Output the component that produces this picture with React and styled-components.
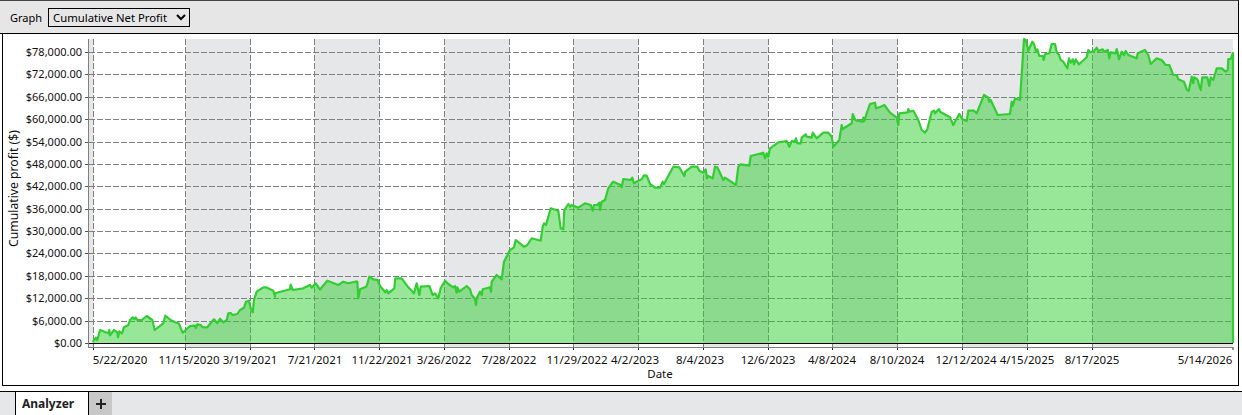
import React from "react";
import styled, { createGlobalStyle } from "styled-components";

const GlobalStyle = createGlobalStyle`
  html, body { margin: 0; padding: 0; background: #fff; }
  body { font-family: "Noto Sans", "Liberation Sans", sans-serif; }
`;

const Page = styled.div`
  width: 1242px;
  height: 415px;
  display: flex;
  flex-direction: column;
  overflow: hidden;
  background: #fff;
`;

const Toolbar = styled.div`
  box-sizing: border-box;
  width: 1239px;
  height: 34px;
  display: flex;
  align-items: center;
  gap: 6px;
  padding: 0 0 0 10px;
  background: #e6e6e6;
  border-top: 1px solid #444;
  border-right: 1px solid #000;
  border-bottom: 1px solid #000;
`;

const Label = styled.span`
  font-size: 11px;
  color: #000;
`;

const GraphSelect = styled.select`
  box-sizing: border-box;
  width: 142px;
  height: 19px;
  padding: 0;
  font-family: "Noto Sans", sans-serif;
  font-size: 11.3px;
  color: #000;
  background: #e6e6e6;
  border: 1px solid #000;
  border-radius: 0;
  outline: none;
`;

const ChartPanel = styled.div`
  box-sizing: border-box;
  width: 1237px;
  height: 353px;
  margin: -1px 0 0 2px;
  border: 1px solid #000;
  background: #fff;
`;

const ChartSvg = styled.svg`
  display: block;
  width: 1235px;
  height: 351px;
`;

const AxisText = styled.text`
  font-family: "Noto Sans", sans-serif;
  font-size: ${(p) => p.$size || 11.5}px;
  fill: #111;
`;

const TabBar = styled.div`
  box-sizing: border-box;
  width: 1242px;
  height: 24px;
  margin-top: 5px;
  padding-left: 15px;
  display: flex;
  background: #e6e7e9;
  border-top: 1px solid #000;
`;

const Tab = styled.div`
  box-sizing: border-box;
  width: 74px;
  height: 23px;
  padding-left: 6px;
  display: flex;
  align-items: center;
  font-size: 12px;
  font-weight: 700;
  color: #222;
  background: #fff;
  border-left: 1px solid #000;
  border-right: 1px solid #000;
`;

const AddTab = styled.div`
  width: 23px;
  height: 23px;
  display: flex;
  align-items: center;
  justify-content: center;
  background: #c8c8c8;
`;

const ticks = [93.5, 185.5, 250.5, 314.5, 379.5, 444.5, 509.5, 573.5, 638.5, 703.5, 768.5, 832.5, 897.5, 962.5, 1027.5, 1092.5];
const bands = [[89, 93.5], [185.5, 250.5], [314.5, 379.5], [444.5, 509.5], [573.5, 638.5], [703.5, 768.5], [832.5, 897.5], [962.5, 1027.5], [1092.5, 1233]];
const xLabels = [
  ["5/22/2020", 120], ["11/15/2020", 189], ["3/19/2021", 250], ["7/21/2021", 315], ["11/22/2021", 382], ["3/26/2022", 444],
  ["7/28/2022", 509], ["11/29/2022", 577], ["4/2/2023", 635], ["8/4/2023", 700], ["12/6/2023", 768], ["4/8/2024", 832],
  ["8/10/2024", 897], ["12/12/2024", 966], ["4/15/2025", 1027], ["8/17/2025", 1092], ["5/14/2026", 1205],
];
const yValue = (i) => 343 - i * 22.385;
const money = (i) => `$${(i * 6000).toLocaleString("en-US")}.00`;

const curve = "93,342 95.7,337.7 97.3,340 100,330 108.3,333.3 109.3,330 110,335.3 114,330 117.3,332.3 118,337.3 119.3,331.3 122,333.3 124,327.3 128.3,325 130,320 132.7,317.3 134.3,319.3 135.7,317.3 137.3,320 141.7,320 146.7,316 152.3,320 154.7,330 163.3,323.3 165.3,315.7 170.7,320 175,322.3 178.7,323.3 182.7,332.7 185.7,330 190,326 195,325.7 195.7,328 197.3,324.3 200.7,325 202.7,327.3 207.3,327.3 211.7,321.7 214,319.3 217.3,323.3 220,318.7 223.3,322.3 226.7,320 228.3,313.3 230.7,313 232.7,315 237.3,314 240,310 244,307.7 246,301.7 249,300.7 250.7,308.3 252.7,312.3 254,300 256.7,291.7 263.3,287.3 266,287.3 273.3,290.7 275,296.7 275,293.3 290,289.3 290.7,284.7 292.7,290 303.3,288.3 310,285 311.7,287.7 315.7,283.3 320,289.5 327.3,280.7 338.3,285 343.3,281.7 348.3,283.3 355,281.7 357.3,281.7 358.3,298.3 360,289.3 366,286.7 367,285 369.3,276.7 373.3,279.3 377.7,280 380,286 385.3,292.3 386.7,290 388.3,293.3 394.3,288.3 395.3,278.3 401.7,278.3 408.3,287.3 414,293.3 416.7,283.3 419.3,295 420.7,286.7 429.3,286 432.7,295 435,293.3 438.3,298.3 440.7,288.3 445,280.7 448.3,284 453.3,287.3 455,286 456.7,292.7 457.3,287.3 459.3,291.7 466.7,286 470,289.3 471.7,295 475,299 476,305 476.7,298.3 480,291.7 481.7,295 482.7,289.3 490,287.3 491,291.7 491.7,281.7 496.7,275 501.7,279.3 504,261.7 510,250 514,247.3 515.7,240 524,246.7 527.3,245 531.7,238.3 540.7,240.7 542.7,226.7 544,223.3 546,225 550.7,208.3 558.3,210.7 560.7,228.3 563.3,229.3 564.3,210 568.3,204 570,206.7 571.7,205 578.3,207.7 585,203.3 590.7,205 592.7,210.7 594,205 597.3,205 599.3,202.7 600,210 601.7,201.7 605,200 608.3,188.3 611.7,183.3 613.3,181.7 620.7,185 621.7,187.3 623.3,179 630.7,180 632.3,177.7 634,183.3 638.3,180.7 641.7,179.3 644,175.3 646.7,175.7 650,184 655,187.7 660,187.7 662.7,181.7 664,184 673.3,166.7 679.3,167.3 684.3,176 685.3,171.7 691.7,166.7 697.3,166.7 699.3,170.7 703.3,172.7 705.7,169.3 707,178.3 708.3,176 712.7,178.3 715,166.7 717.3,167.3 723.3,180 725,177.7 736,185 738.3,166.7 740.7,164.3 749.3,165.7 750.7,156 763.3,152.7 765,158.3 766.7,153.3 768.3,156.7 770,148.3 778.3,142.3 786.7,141 789.3,146.7 791.7,141 795,141.7 796,138.3 797.3,143.3 800.7,143.3 801.7,137.7 805.7,134.3 806.7,136.7 811.7,137.7 812.7,132.7 816.7,138.3 823.3,132.7 828.3,132.7 831.7,136.7 833.3,146.7 839.3,140 841.7,125 842.3,129.3 851.7,123.3 852.7,114 855.3,120 857.3,120.7 862.7,121.7 863.3,117.7 864.3,121 866.7,113.3 870,104 875,102.7 876,108.3 880.7,106.7 884.3,105 890,112.7 896.7,117.7 898.3,125 899.3,113.3 907.7,112.3 908.3,109 909.3,111.7 913.3,110.7 918.3,120 921.7,130 925,132.7 927.3,129.3 931.7,111.7 934,110.7 935,113.3 939,109 940,111.7 950,117.3 953.3,125 959.3,114 962.7,119.3 966.7,121 968.3,110.7 974,110.7 976.7,113.3 984,95 988.3,97.7 989.3,101.7 990.7,100 997.7,115 1010,114 1011.7,101.7 1012.7,106 1015,98.3 1020,100 1024,39 1025.7,40 1028.3,50.7 1032.3,41.7 1034,44 1036,51.7 1037.3,49.3 1039.3,56 1042.7,56 1043.7,60 1045,54.3 1049.3,53.3 1051.7,44 1055,44 1056.7,52.3 1059,55 1060.7,60 1063.3,61.7 1067.3,68.3 1069,58.3 1070.7,62.7 1072.7,59.3 1074,64.3 1075.7,59.3 1079,64.3 1086.7,57.3 1088.3,50 1090,52.3 1093.3,51.7 1096.7,47.7 1098.3,51 1102.7,49.3 1104,51.7 1107.7,50 1109.3,58.3 1110.7,52.3 1115.7,53.3 1116.7,49 1119,59.3 1121.7,51.7 1124,55 1125.7,51 1128.3,55 1136.7,58.3 1137.7,53.3 1145,50 1148.3,55 1150.7,64 1156.7,58.3 1161.7,60 1165.7,65 1169.3,65 1173.3,75 1176.7,75 1178.3,79.3 1184,81.7 1186.7,89.3 1188.7,91 1191.7,76.7 1193.3,83.3 1194,77.3 1197.3,79.3 1200.7,90 1202.3,77.3 1207.3,77.3 1209.3,86 1210.7,77.3 1213.3,80 1216.7,68.3 1221.7,68.3 1225.7,71.7 1227.7,70 1228.3,59 1230.7,59 1232.7,53.3";

export default function App() {
  return (
    <Page>
      <GlobalStyle />
      <Toolbar>
        <Label>Graph</Label>
        <GraphSelect defaultValue="net">
          <option value="net">Cumulative Net Profit</option>
        </GraphSelect>
      </Toolbar>
      <ChartPanel>
        <ChartSvg viewBox="3 34 1235 351">
          {bands.map(([a, b]) => (
            <rect key={a} x={a} y={39} width={b - a} height={308} fill="#e6e7e9" />
          ))}
          {Array.from({ length: 14 }, (_, i) => (
            <g key={i}>
              {i > 0 && <line x1={89} x2={1233} y1={Math.round(yValue(i)) + 0.5} y2={Math.round(yValue(i)) + 0.5} stroke="#808080" strokeDasharray="6 2" />}
              <line x1={85} x2={88} y1={Math.round(yValue(i)) + 0.5} y2={Math.round(yValue(i)) + 0.5} stroke="#555" />
              <AxisText $size={11} x={82} y={yValue(i) + 4} textAnchor="end">{money(i)}</AxisText>
            </g>
          ))}
          {ticks.map((x) => (
            <g key={x}>
              <line x1={x} x2={x} y1={39} y2={347} stroke="#808080" strokeDasharray="6 2" />
              <line x1={x} x2={x} y1={347} y2={350} stroke="#222" />
            </g>
          ))}
          <line x1={1233} x2={1233} y1={347} y2={350} stroke="#222" />
          <polygon points={`93,343 ${curve} 1233,53 1233,343`} fill="#32cd32" fillOpacity="0.5" />
          <polyline points={`${curve} 1233,53 1233,343`} fill="none" stroke="#32cd32" strokeWidth="2.2" strokeLinejoin="round" />
          <line x1={88} x2={1233} y1={343.5} y2={343.5} stroke="#000" />
          <line x1={88.5} x2={88.5} y1={39} y2={347} stroke="#808080" />
          <line x1={88} x2={1233} y1={347.5} y2={347.5} stroke="#808080" />
          {xLabels.map(([t, x]) => (
            <AxisText key={t} x={x} y={364} textAnchor="middle">{t}</AxisText>
          ))}
          <AxisText x={660} y={378} textAnchor="middle">Date</AxisText>
          <AxisText $size={12.2} x={0} y={0} textAnchor="middle" transform="translate(18 188.5) rotate(-90)">Cumulative profit ($)</AxisText>
        </ChartSvg>
      </ChartPanel>
      <TabBar>
        <Tab>Analyzer</Tab>
        <AddTab>
          <svg width="12" height="12" viewBox="0 0 12 12"><path d="M1 6h10M6 1v10" stroke="#222" strokeWidth="2" /></svg>
        </AddTab>
      </TabBar>
    </Page>
  );
}
